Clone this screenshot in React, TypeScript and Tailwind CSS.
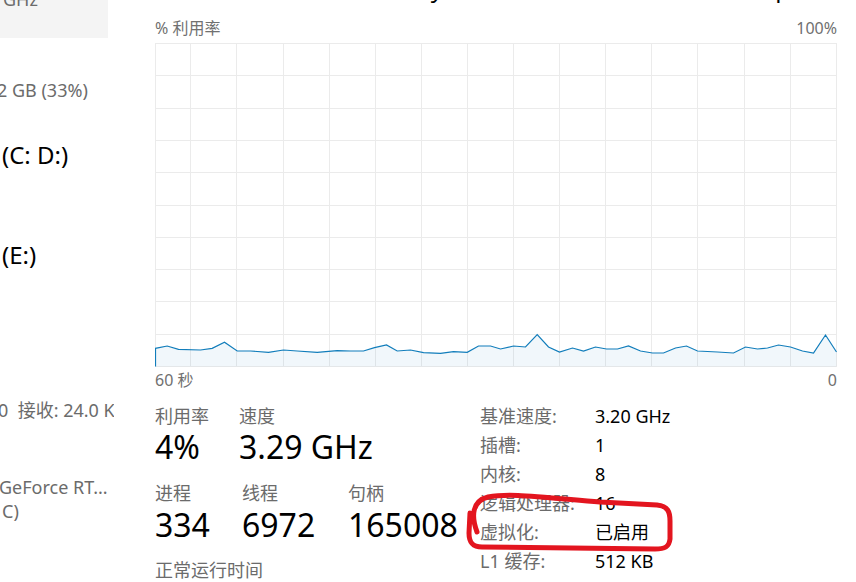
import React from 'react';

// CPU usage samples, chart coordinates (0..681 x 0..323)
const samples: [number, number][] = [
  [0, 305.3], [11.7, 303], [23, 306.3], [45, 307], [56.7, 305.3], [69, 299.3],
  [81.7, 308], [95, 308], [113, 309.3], [128, 307], [141.7, 308], [161.7, 309.3],
  [181.7, 307.7], [195, 308], [208, 308], [219, 304.7], [231, 302], [241.7, 308],
  [255, 307], [268, 309.7], [285, 310.3], [298, 308.7], [311.7, 309.3], [323, 303],
  [335, 303], [345, 306], [358, 303], [370, 304], [381.7, 291.7], [393, 304],
  [404, 309], [417, 305], [428, 308], [440, 304], [451, 306], [462, 306],
  [473, 303], [485, 308], [497, 310], [508, 310], [520, 305], [531, 303],
  [542, 308], [562, 309], [578, 310], [590, 304], [602, 306], [612, 305],
  [623, 302], [635, 304], [647, 308], [658, 310], [670, 292], [681, 309],
];

const W = 682;
const H = 324;

function UsageChart() {
  const line = samples.map(([x, y]) => `${x + 0.5},${y}`).join(' ');
  const area = `0.5,${H - 0.5} ${line} ${W - 0.5},${H - 0.5}`;
  const rows = Array.from({ length: 11 }, (_, i) => Math.round(i * 32.3) + 0.5);
  const cols = Array.from({ length: 14 }, (_, i) => Math.round(35.3 + i * 46.1) + 0.5);

  return (
    <svg width={W} height={H} viewBox={`0 0 ${W} ${H}`} className="block shrink-0">
      {rows.map((y) => (
        <line key={`r${y}`} x1={0} x2={W} y1={Math.min(y, H - 0.5)} y2={Math.min(y, H - 0.5)} stroke="#ebebeb" strokeWidth={1} />
      ))}
      {cols.map((x) => (
        <line key={`c${x}`} x1={x} x2={x} y1={0} y2={H} stroke="#ebebeb" strokeWidth={1} />
      ))}
      <line x1={0.5} x2={0.5} y1={0} y2={H} stroke="#ebebeb" />
      <line x1={W - 0.5} x2={W - 0.5} y1={0} y2={H} stroke="#ebebeb" />
      <polygon points={area} fill="#117dbb" fillOpacity={0.06} />
      <polyline points={`0.5,${H - 0.5} ${line}`} fill="none" stroke="#117dbb" strokeWidth={1.2} />
    </svg>
  );
}

const details: [string, string][] = [
  ['基准速度:', '3.20 GHz'],
  ['插槽:', '1'],
  ['内核:', '8'],
  ['逻辑处理器:', '16'],
  ['虚拟化:', '已启用'],
  ['L1 缓存:', '512 KB'],
];

export default function App() {
  return (
    <div className="relative flex w-[856px] h-[582px] overflow-hidden bg-white text-black font-['Noto_Sans','Noto_Sans_CJK_SC',sans-serif]">
      {/* Sidebar (cropped) */}
      <div className="w-[114px] shrink-0 overflow-hidden flex flex-col whitespace-nowrap">
        <div className="w-[108px] h-[38px] shrink-0 bg-[#f4f4f4] overflow-hidden">
          <div className="-mt-[13px] pl-[3px] text-[18px] leading-[24px] text-[#6b6b6b]">GHz</div>
        </div>
        <div className="mt-[40px] -ml-[3px] text-[18px] leading-[24px] text-[#6b6b6b]">2 GB (33%)</div>
        <div className="mt-[37px] ml-[2px] text-[24px] leading-[32px]">(C: D:)</div>
        <div className="mt-[68px] ml-[2px] text-[24px] leading-[32px]">(E:)</div>
        <div className="mt-[127px] -ml-[2px] text-[18px] leading-[24px] text-[#6b6b6b]">0&nbsp;&nbsp;接收: 24.0 Kbps</div>
        <div className="mt-[54px] -ml-[1px] text-[18px] leading-[23px] text-[#6b6b6b]">GeForce RT...</div>
        <div className="ml-[2px] text-[18px] leading-[24px] text-[#6b6b6b]">C)</div>
      </div>

      {/* Main CPU panel */}
      <div className="ml-[41px] w-[682px] shrink-0 flex flex-col">
        <div className="-mt-[24px] h-[24px] shrink-0 flex justify-between text-[24px] leading-[24px] whitespace-nowrap">
          <span>CPU</span>
          <span className="pr-[3px]">AMD Ryzen 7 5800H with Radeon Graphics</span>
        </div>
        <div className="flex shrink-0 justify-between pt-[18px] pb-[5px] text-[16px] leading-[20px] text-[#707070]">
          <span>% 利用率</span>
          <span>100%</span>
        </div>
        <UsageChart />
        <div className="mt-[3px] flex shrink-0 justify-between text-[16px] leading-[20px] text-[#707070]">
          <span>60 秒</span>
          <span>0</span>
        </div>

        <div className="flex shrink-0">
          <div className="w-[325px] pt-[14px]">
            <div className="flex">
              <div className="w-[84px]">
                <div className="text-[18px] leading-[24px] text-[#6b6b6b]">利用率</div>
                <div className="mt-[1px] text-[32px] leading-[36px]">4%</div>
              </div>
              <div>
                <div className="text-[18px] leading-[24px] text-[#6b6b6b]">速度</div>
                <div className="mt-[1px] text-[32px] leading-[36px] whitespace-nowrap">3.29 GHz</div>
              </div>
            </div>
            <div className="mt-[16px] flex">
              <div className="w-[87px]">
                <div className="text-[18px] leading-[24px] text-[#6b6b6b]">进程</div>
                <div className="mt-[2px] text-[32px] leading-[36px]">334</div>
              </div>
              <div className="w-[106px]">
                <div className="text-[18px] leading-[24px] text-[#6b6b6b]">线程</div>
                <div className="mt-[2px] text-[32px] leading-[36px]">6972</div>
              </div>
              <div>
                <div className="text-[18px] leading-[24px] text-[#6b6b6b]">句柄</div>
                <div className="mt-[2px] text-[32px] leading-[36px]">165008</div>
              </div>
            </div>
            <div className="mt-[15px] text-[18px] leading-[24px] text-[#6b6b6b]">正常运行时间</div>
          </div>

          <div className="pt-[12px]">
            {details.map(([label, value]) => (
              <div key={label} className="flex h-[29px] items-center text-[18px] whitespace-nowrap">
                <span className="w-[115px] text-[#6b6b6b]">{label}</span>
                <span>{value}</span>
              </div>
            ))}
          </div>
        </div>
      </div>

      {/* Red hand-drawn highlight */}
      <svg className="pointer-events-none absolute inset-0" width={856} height={582} viewBox="0 0 856 582">
        <path
          d="M 477 532 C 471 516, 472 501, 488 497 C 508 493, 530 496, 600 502 L 657 505 C 668 506, 670 512, 670 521 L 670 539 C 669 547, 665 549, 655 549 L 482 547 C 472 547, 469 542, 469 533 L 470 513"
          fill="none"
          stroke="#e3151f"
          strokeWidth={5}
          strokeLinecap="round"
          strokeLinejoin="round"
        />
      </svg>
    </div>
  );
}
